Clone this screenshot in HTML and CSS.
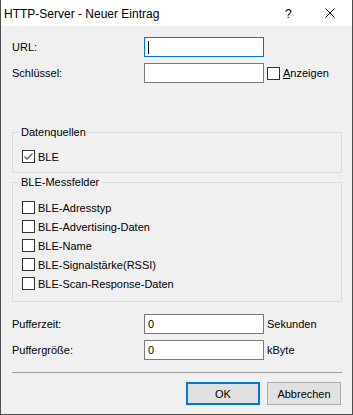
FILE: index.html
```html
<!DOCTYPE html>
<html lang="de">
<head>
  <meta charset="UTF-8">
  <title>HTTP-Server - Neuer Eintrag</title>
  <link rel="stylesheet" href="styles.css">
</head>
<body>
<div class="window">
  <div class="titlebar">
    <span class="title">HTTP-Server - Neuer Eintrag</span>
    <span class="tb-help">?</span>
    <span class="tb-close">
      <svg width="10" height="10" viewBox="0 0 10 10" stroke="#000" stroke-width="1">
        <path d="M0.5 0.5L9.5 9.5M9.5 0.5L0.5 9.5"/>
      </svg>
    </span>
  </div>

  <div class="content">
    <div class="field-row">
      <span class="lbl">URL:</span>
      <div class="textbox focused"><span class="caret"></span></div>
    </div>
    <div class="field-row">
      <span class="lbl">Schlüssel:</span>
      <div class="textbox"></div>
      <label class="check inline"><span class="box"></span><span><u>A</u>nzeigen</span></label>
    </div>

    <fieldset class="group first">
      <legend>Datenquellen</legend>
      <div class="group-body">
        <label class="check"><span class="box checked">
          <svg width="11" height="11" viewBox="0 0 11 11"><path d="M1.5 5.5L4 8L9.5 2.5" fill="none" stroke="#5c5c5c" stroke-width="1.3"/></svg>
        </span><span>BLE</span></label>
      </div>
    </fieldset>

    <fieldset class="group">
      <legend>BLE-Messfelder</legend>
      <div class="group-body">
        <label class="check"><span class="box"></span><span>BLE-Adresstyp</span></label>
        <label class="check"><span class="box"></span><span>BLE-Advertising-Daten</span></label>
        <label class="check"><span class="box"></span><span>BLE-Name</span></label>
        <label class="check"><span class="box"></span><span>BLE-Signalstärke(RSSI)</span></label>
        <label class="check"><span class="box"></span><span>BLE-Scan-Response-Daten</span></label>
      </div>
    </fieldset>

    <div class="field-row buffer">
      <span class="lbl">Pufferzeit:</span>
      <div class="textbox">0</div>
      <span class="unit">Sekunden</span>
    </div>
    <div class="field-row">
      <span class="lbl">Puffergröße:</span>
      <div class="textbox">0</div>
      <span class="unit">kByte</span>
    </div>

    <div class="separator"></div>

    <div class="buttons">
      <button type="button" class="btn default">OK</button>
      <button type="button" class="btn">Abbrechen</button>
    </div>
  </div>
</div>
</body>
</html>
```

FILE: styles.css
```css
body { margin: 0; background: #f0f0f0; font-family: "Liberation Sans", Arial, sans-serif; font-size: 11px; color: #000; }
.window {
  width: 353px;
  height: 415px;
  box-sizing: border-box;
  border: 1px solid #4d4d4d;
  border-top: none;
  display: flex;
  flex-direction: column;
  background: #f0f0f0;
}
.titlebar {
  height: 26px;
  background: #fff;
  display: flex;
  align-items: center;
  padding-left: 3px;
  flex-shrink: 0;
}
.title { font-size: 12px; flex: 1; padding-top: 1px; }
.tb-help { font-size: 12px; width: 12px; margin-right: 28px; padding-top: 1px; }
.tb-close { width: 10px; height: 10px; margin-right: 17px; display: flex; }
.tb-close svg { display: block; }

.content {
  flex: 1;
  padding: 11px 10px 0 11px;
  display: flex;
  flex-direction: column;
}
.field-row {
  display: grid;
  grid-template-columns: 132px 120px auto;
  align-items: center;
  height: 20px;
  margin-bottom: 6px;
}
.field-row.buffer { margin-top: 12px; }
.textbox {
  height: 20px;
  box-sizing: border-box;
  border: 1px solid #7a7a7a;
  background: #fff;
  padding: 0 3px;
  line-height: 18px;
  display: flex;
  align-items: center;
}
.textbox.focused { border-color: #0078d7; }
.caret { width: 1px; height: 13px; background: #000; }
.unit { padding-left: 3px; }

.check {
  display: flex;
  align-items: center;
  height: 19px;
  gap: 3px;
}
.check.inline { padding-left: 3px; }
.box {
  width: 13px;
  height: 13px;
  box-sizing: border-box;
  border: 1px solid #333;
  background: #fff;
  display: flex;
  align-items: center;
  justify-content: center;
}
.box svg { display: block; }

.group {
  margin: 0;
  padding: 0 0 0 6px;
  border: 1px solid #dcdcdc;
}
.group.first { margin-top: 37px; }
.group + .group { margin-top: 3px; }
.group legend { padding: 0 2px; line-height: 13px; }
.group-body { padding: 8px 0 6px 3px; display: flex; flex-direction: column; }
.group:not(.first) .group-body { padding: 9px 0 8px 3px; }

.separator { height: 1px; background: #a0a0a0; margin-top: 6px; }

.buttons {
  display: flex;
  justify-content: flex-end;
  gap: 7px;
  margin-top: 9px;
  padding-right: 1px;
}
.btn {
  height: 23px;
  width: 74px;
  font-family: inherit;
  font-size: 11px;
  background: #e1e1e1;
  border: 1px solid #adadad;
  padding: 0;
  color: #000;
}
.btn.default { border: 2px solid #0078d7; }
```
